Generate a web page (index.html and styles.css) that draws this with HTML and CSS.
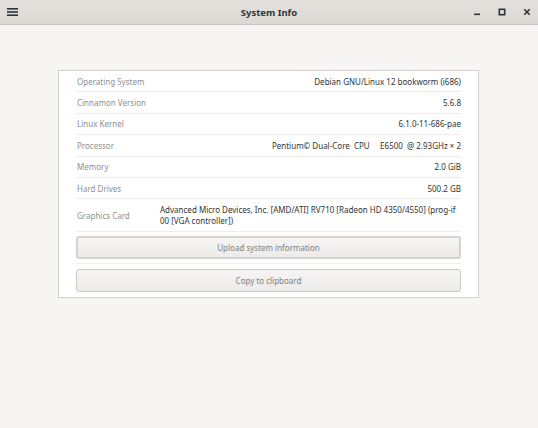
FILE: index.html
```html
<!DOCTYPE html>
<html>
<head>
<meta charset="utf-8">
<link rel="stylesheet" href="styles.css">
</head>
<body>
<div class="window">
  <header class="titlebar">
    <div class="menu">
      <svg width="11" height="8" viewBox="0 0 11 8"><rect x="0" y="0" width="11" height="1.6" fill="#2e3436"/><rect x="0" y="3.2" width="11" height="1.6" fill="#2e3436"/><rect x="0" y="6.4" width="11" height="1.6" fill="#2e3436"/></svg>
    </div>
    <div class="title">System Info</div>
    <div class="controls">
      <svg class="ctl" width="8" height="8" viewBox="0 0 8 8"><rect x="1" y="5.5" width="6" height="1.6" fill="#2e3436"/></svg>
      <svg class="ctl" width="8" height="8" viewBox="0 0 8 8"><rect x="1.3" y="1.3" width="5.4" height="5.4" fill="none" stroke="#2e3436" stroke-width="1.6"/></svg>
      <svg class="ctl" width="8" height="8" viewBox="0 0 8 8"><path d="M1.3 1.3 L6.7 6.7 M6.7 1.3 L1.3 6.7" stroke="#2e3436" stroke-width="1.6"/></svg>
    </div>
  </header>
  <main class="content">
    <div class="frame">
      <div class="row"><span class="label">Operating System</span><span class="value">Debian GNU/Linux 12 bookworm (i686)</span></div>
      <div class="row"><span class="label">Cinnamon Version</span><span class="value">5.6.8</span></div>
      <div class="row"><span class="label">Linux Kernel</span><span class="value">6.1.0-11-686-pae</span></div>
      <div class="row"><span class="label">Processor</span><span class="value pre">Pentium© Dual-Core  CPU     E6500  @ 2.93GHz × 2</span></div>
      <div class="row"><span class="label">Memory</span><span class="value">2.0 GiB</span></div>
      <div class="row"><span class="label">Hard Drives</span><span class="value">500.2 GB</span></div>
      <div class="row tall"><span class="label">Graphics Card</span><span class="value wrap">Advanced Micro Devices, Inc. [AMD/ATI] RV710 [Radeon HD 4350/4550] (prog-if 00 [VGA controller])</span></div>
      <div class="row btnrow"><button class="btn focus">Upload system information</button></div>
      <div class="row btnrow last"><button class="btn">Copy to clipboard</button></div>
    </div>
  </main>
</div>
</body>
</html>
```
FILE: styles.css
```css
html, body {
  margin: 0;
  padding: 0;
  background: #f6f5f4;
}
.window {
  width: 538px;
  height: 428px;
  font-family: "Noto Sans", "Open Sans", sans-serif;
  color: #2e3436;
  background: #f6f5f4;
  display: flex;
  flex-direction: column;
}
.titlebar {
  height: 24px;
  border-bottom: 1px solid #c9c4bf;
  background: linear-gradient(#e4e1de, #dcd8d4);
  display: flex;
  align-items: center;
}
.menu {
  width: 24px;
  padding-left: 7px;
  display: flex;
  align-items: center;
}
.title {
  flex: 1;
  text-align: center;
  font-weight: bold;
  font-size: 9.5px;
  padding-left: 34px;
}
.controls {
  display: flex;
  align-items: center;
  gap: 17px;
  padding-right: 7px;
}
.ctl {
  display: block;
}
.content {
  padding: 45px 59px 0 58px;
}
.frame {
  background: #ffffff;
  border: 1px solid #d5d0cc;
  padding: 0 17px;
  font-size: 8px;
}
.row {
  display: flex;
  align-items: center;
  height: 20.4px;
  border-bottom: 1px solid #ececeb;
}
.row.last {
  border-bottom: none;
}
.row.tall {
  height: 32px;
}
.label {
  color: #8e9091;
  padding-left: 1px;
  width: 83px;
  flex: none;
}
.value {
  flex: 1;
  text-align: right;
  color: #2e3436;
}
.value.pre {
  white-space: pre;
}
.value.wrap {
  text-align: left;
  line-height: 11px;
}
.btnrow {
  height: 31px;
}
.btnrow.last {
  height: 33px;
}
.btn {
  flex: 1;
  height: 23px;
  border: 1px solid #cdc7c2;
  border-radius: 3px;
  background: linear-gradient(#f6f5f4, #edebe9);
  color: #7c7f80;
  font-family: "Noto Sans", "Open Sans", sans-serif;
  font-size: 8px;
  padding: 0;
}
.btn.focus {
  border: 2px solid #d8d3cf;
}
```
